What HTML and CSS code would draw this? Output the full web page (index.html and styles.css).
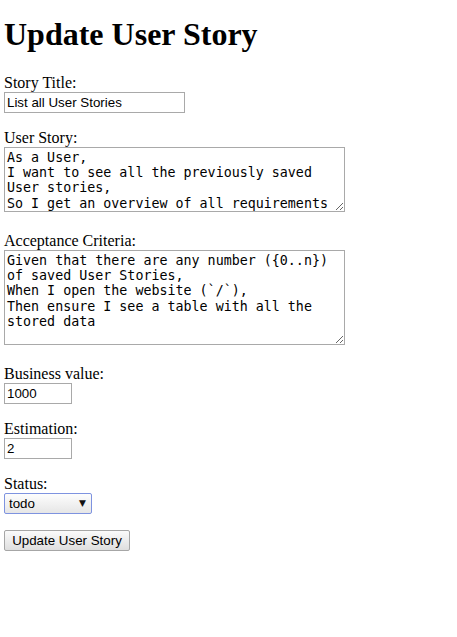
FILE: index.html
```html
<!DOCTYPE html>
<html>
<head>
<meta charset="utf-8">
<title>Update User Story</title>
<link rel="stylesheet" href="styles.css">
</head>
<body>
<h1 class="title">Update User Story</h1>
<form class="form">
<p class="field"><label class="lbl">Story Title:</label><br><input class="txt txt-title" type="text" value="List all User Stories"></p>
<p class="field"><label class="lbl">User Story:</label><br><textarea class="area area-story">As a User,
I want to see all the previously saved
User stories,
So I get an overview of all requirements</textarea></p>
<p class="field"><label class="lbl">Acceptance Criteria:</label><br><textarea class="area area-criteria">Given that there are any number ({0..n})
of saved User Stories,
When I open the website (`/`),
Then ensure I see a table with all the
stored data</textarea></p>
<p class="field"><label class="lbl">Business value:</label><br><input class="txt txt-num" type="text" value="1000"></p>
<p class="field"><label class="lbl">Estimation:</label><br><input class="txt txt-num" type="text" value="2"></p>
<p class="field"><label class="lbl">Status:</label><br><span class="sel-wrap"><select class="sel"><option>todo</option><option>in progress</option><option>done</option></select><span class="sel-arrow">▼</span></span></p>
<p class="field"><button class="btn" type="button">Update User Story</button></p>
</form>
</body>
</html>
```
FILE: styles.css
```css
html, body {
  background: #ffffff;
}
body {
  margin: 0;
  padding: 0 4px;
  font-family: "Liberation Serif", "Times New Roman", serif;
  font-size: 16px;
  color: #000;
}
.title {
  font-size: 32px;
  font-weight: bold;
  margin: 16px 0 21px 0;
  line-height: 37px;
}
.form {
  margin: 0;
}
.field {
  margin: 16px 0;
  line-height: normal;
}
.lbl {
  font-size: 16px;
}
.txt {
  box-sizing: border-box;
  height: 21px;
  margin: 0;
  padding: 1px 2px;
  border: 1px solid #a9a9a9;
  font-family: "Liberation Sans", Arial, sans-serif;
  font-size: 13.333px;
  color: #000;
  background: #fff;
  vertical-align: baseline;
}
.txt-title {
  width: 181px;
}
.txt-num {
  width: 68px;
}
.area {
  box-sizing: border-box;
  width: 341px;
  margin: 0;
  padding: 2px 2px;
  border: 1px solid #a9a9a9;
  font-family: "DejaVu Sans Mono", monospace;
  font-size: 13.333px;
  line-height: 15.2px;
  color: #000;
  background: #fff;
  resize: both;
  overflow: hidden;
  vertical-align: baseline;
}
.area-story {
  height: 65px;
}
.area-criteria {
  height: 95px;
}
.sel-wrap {
  position: relative;
  display: inline-block;
  vertical-align: baseline;
}
.sel {
  -webkit-appearance: none;
  appearance: none;
  box-sizing: border-box;
  width: 88px;
  height: 21px;
  margin: 0;
  padding: 0 4px;
  border: 1px solid #7e93e0;
  border-radius: 2px;
  background: linear-gradient(#fdfdfd, #e6e6e6);
  font-family: "Liberation Sans", Arial, sans-serif;
  font-size: 13.333px;
  color: #000;
  outline: none;
}
.sel-arrow {
  position: absolute;
  right: 6px;
  top: 4px;
  font-family: "DejaVu Sans", sans-serif;
  font-size: 9px;
  line-height: 12px;
  color: #111;
  pointer-events: none;
}
.btn {
  box-sizing: border-box;
  width: 126px;
  height: 21px;
  margin: 0;
  padding: 1px 6px;
  border: 1px solid #a6a6a6;
  border-radius: 2px;
  background: linear-gradient(#fbfbfb, #dedede);
  font-family: "Liberation Sans", Arial, sans-serif;
  font-size: 13.333px;
  color: #000;
}
```
